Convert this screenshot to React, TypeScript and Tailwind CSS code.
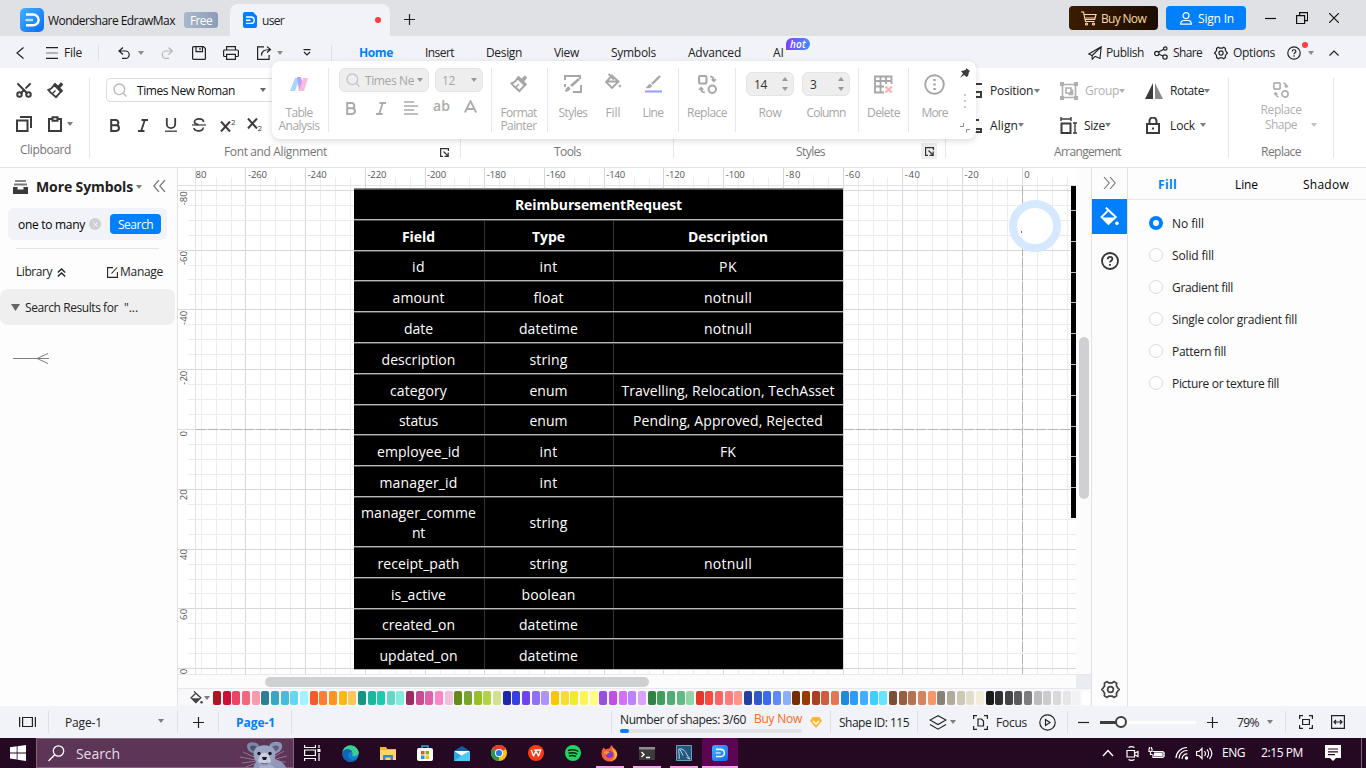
import { useLayoutEffect, useRef } from 'react';
import type { ReactNode } from 'react';
import { Scissors, Search, X } from 'lucide-react';

/** Single-line text whose tracking is adjusted so that it fills a known width. */
function Fit({ w, className = '', children }: { w: number; className?: string; children: string }) {
  const ref = useRef<HTMLSpanElement>(null);
  useLayoutEffect(() => {
    const el = ref.current;
    if (!el) return;
    el.style.letterSpacing = '0px';
    const natural = el.getBoundingClientRect().width;
    el.style.letterSpacing = `${(w - natural) / children.length}px`;
  }, [w, children]);
  return (
    <span className={`block shrink-0 overflow-visible whitespace-pre ${className}`} style={{ width: w }}>
      <span ref={ref} className="inline-block whitespace-pre">{children}</span>
    </span>
  );
}

function Svg({ w, h, className = '', sw = 1.2, children }: { w: number; h: number; className?: string; sw?: number; children: ReactNode }) {
  return (
    <svg width={w} height={h} viewBox={`0 0 ${w} ${h}`} fill="none" stroke="currentColor" strokeWidth={sw} className={`block shrink-0 ${className}`}>
      {children}
    </svg>
  );
}

function Caret({ className = '', fill = '#7d7d7d' }: { className?: string; fill?: string }) {
  return (
    <Svg w={6} h={4} className={className}>
      <path d="M0 0h6L3 4z" fill={fill} stroke="none" />
    </Svg>
  );
}

function EdrawLogo({ size, className = '' }: { size: number; className?: string }) {
  return (
    <svg width={size} height={size} viewBox="0 0 24 24" fill="none" className={`block shrink-0 ${className}`}>
      <defs>
        <linearGradient id="edraw" x1="0" y1="0" x2="1" y2="1">
          <stop offset="0" stopColor="#45b0ff" />
          <stop offset="1" stopColor="#0a6cff" />
        </linearGradient>
      </defs>
      <rect width="24" height="24" rx="5" fill="url(#edraw)" />
      <path d="M6 6.500h7.200a5.400 5.400 0 0 1 0 10.800H6" stroke="#fff" strokeWidth="2.400" />
      <path d="M5.500 12h7.500" stroke="#b9e0ff" strokeWidth="2.400" />
    </svg>
  );
}

function Divider({ className = '' }: { className?: string }) {
  return <div className={`w-px shrink-0 bg-[#dfe0e4] ${className}`} />;
}

function TitleBar() {
  return (
    <div className="flex h-9 shrink-0 items-center bg-[#e0e1e5]">
      <EdrawLogo size={24} className="ml-5 mt-1" />
      <Fit w={127} className="ml-1 mt-[6px] text-[#111]">Wondershare EdrawMax</Fit>
      <div className="ml-[9px] mt-1 flex h-4 w-[34px] items-center justify-center rounded-[3px] bg-linear-to-r from-[#a9b8ca] to-[#8c9cb8]">
        <Fit w={22} className="mt-px text-white">Free</Fit>
      </div>
      <div className="ml-3 mt-1 flex h-8 w-40 items-center rounded-t-lg bg-[#f2f3f9]">
        <svg width="14" height="16" viewBox="0 0 14 16" fill="none" className="ml-[13px] block">
          <path d="M2 0h8l4 4v10a2 2 0 0 1-2 2H2a2 2 0 0 1-2-2V2a2 2 0 0 1 2-2z" fill="#0080ff" />
          <path d="M3 5h5a3.100 3.100 0 0 1 0 6.400H3M3 8.200h4.500" stroke="#fff" strokeWidth="1.400" />
        </svg>
        <Fit w={22} className="ml-[5px] mt-0.5 text-[#222]">user</Fit>
        <div className="ml-[91px] size-1.5 rounded-full bg-[#ff3b3b]" />
      </div>
      <Svg w={11} h={11} className="ml-[14px] mt-[3px] text-[#222]"><path d="M5.500 0v11M0 5.500h11" /></Svg>
      <div className="ml-auto flex h-6 w-[89px] items-center rounded bg-linear-to-r from-[#3a1d03] to-[#1b0c00] text-[#fbd8a4]">
        <Svg w={16} h={15} className="ml-3"><path d="M0 1h2.500l2 9.500h9M3.500 3.500h11.500l-1.300 5H4M4.500 7h9.500" /><circle cx="5.500" cy="13" r="1" /><circle cx="12.500" cy="13" r="1" /></Svg>
        <Fit w={45} className="ml-1 mt-0.5">Buy Now</Fit>
      </div>
      <div className="ml-2 flex h-6 w-20 items-center rounded bg-[#0080ff] text-white">
        <Svg w={12} h={13} className="ml-[14px]"><circle cx="6" cy="3.700" r="3" /><path d="M.7 12.200c-.3-3 2-3.700 3-3.700h4.600c1 0 3.300.7 3 3.700z" /></Svg>
        <Fit w={36} className="ml-[6px] mt-0.5">Sign In</Fit>
      </div>
      <Svg w={11} h={11} className="ml-[19px] text-[#111]"><path d="M0 5.500h11" /></Svg>
      <Svg w={12} h={12} className="ml-5 text-[#111]"><path d="M.6 3.600h8v8h-8zM3.600 3.600v-3h8v8h-3" /></Svg>
      <Svg w={10} h={10} className="ml-[21px] mr-[27px] text-[#111]"><path d="M0 0l10 10M10 0L0 10" /></Svg>
    </div>
  );
}

function MenuBar() {
  return (
    <div className="relative flex h-8 shrink-0 items-center bg-[#f2f3f9] pt-px text-[#222]">
      <Svg w={8} h={12} className="ml-4"><path d="M7.500.5L1 6l6.500 5.500" /></Svg>
      <Svg w={12} h={12} className="ml-[22px]"><path d="M0 .6h12M0 11.400h12" /><path d="M0 6h12" stroke="#888" /></Svg>
      <Fit w={18} className="ml-[6px] mt-px">File</Fit>
      <Divider className="ml-4 h-4" />
      <Svg w={13} h={12} className="ml-[19px]"><path d="M5 .5L1 4l4 3.500M1 4h6.500a3.700 3.700 0 0 1 0 7.400H4" /></Svg>
      <Caret className="ml-[7px]" fill="#8a8a8a" />
      <Svg w={12} h={12} className="ml-[17px] text-[#b5b5b5]"><path d="M7.500.5L11.500 4l-4 3.500M11.500 4H5a3.700 3.700 0 0 0 0 7.400h3" /></Svg>
      <Svg w={14} h={14} className="ml-[19px]"><path d="M.6 1.600a1 1 0 0 1 1-1h9.800l2 2v9.800a1 1 0 0 1-1 1H1.600a1 1 0 0 1-1-1zM4 .6v5h6.500v-5M8 2v2" /></Svg>
      <Svg w={16} h={14} className="ml-[17px]"><path d="M3.600 4V.6h8.800V4M3.600 10.500h-2a1 1 0 0 1-1-1V5a1 1 0 0 1 1-1h12.800a1 1 0 0 1 1 1v4.500a1 1 0 0 1-1 1h-2M3.600 8.300h8.800v5.100H3.600z" /></Svg>
      <Svg w={15} h={14} className="ml-[18px]"><path d="M7 .9H.6v12.500h11.500V9M4.500 9.500c0-4 2.500-6 8.500-6M10 .6l3.500 2.900L10 6.500" /></Svg>
      <Caret className="ml-[5px]" fill="#8a8a8a" />
      <Svg w={8} h={7} className="ml-5"><path d="M.5.6h7M1 3l3 3 3-3" /></Svg>
      <Divider className="ml-5 h-4" />
      <div className="ml-[27px] mt-px flex gap-8">
        <Fit w={34} className="font-bold text-[#0080ff]">Home</Fit>
        <Fit w={29}>Insert</Fit>
        <Fit w={36}>Design</Fit>
        <Fit w={25}>View</Fit>
        <Fit w={45}>Symbols</Fit>
        <Fit w={53}>Advanced</Fit>
        <Fit w={11}>AI</Fit>
      </div>
      <div className="absolute left-[786px] top-[2px] flex h-3 w-6 items-center justify-center rounded-[6px] rounded-bl-none bg-linear-to-r from-[#7c3cff] to-[#3c8cff] text-[10px] font-semibold italic text-white">
        <Fit w={16}>hot</Fit>
      </div>
      <Svg w={14} h={14} sw={1.1} className="ml-auto"><path d="M13.200.8L.8 8l3.400 1.500L13.200.8 12 12.500 7 10.300M4.200 9.500v3.800L7 10.300" /></Svg>
      <Fit w={38} className="ml-1 mt-px">Publish</Fit>
      <Svg w={14} h={14} className="ml-[10px]"><circle cx="2.800" cy="7.500" r="2.200" /><circle cx="11.300" cy="2.500" r="1.700" /><circle cx="11" cy="11" r="2.200" /><path d="M4.500 6l5.300-2.800M5 8.300l4 1.700" /></Svg>
      <Fit w={29} className="ml-[5px] mt-px">Share</Fit>
      <Gear size={14} sw={1.2} className="ml-3" />
      <Fit w={42} className="ml-[5px] mt-px">Options</Fit>
      <Help size={14} sw={1.2} className="ml-3" />
      <Caret className="ml-[7px]" fill="#8a8a8a" />
      <Svg w={10} h={6} className="ml-[15px] mr-[27px]"><path d="M.5 5.500L5 1l4.500 4.500" /></Svg>
      <div className="absolute left-[1302px] top-[6px] size-1.5 rounded-full bg-[#ff4040]" />
    </div>
  );
}

function Gear({ size, sw, className = '' }: { size: number; sw: number; className?: string }) {
  return (
    <svg width={size} height={size} viewBox="0 0 18 18" fill="none" stroke="currentColor" strokeWidth={(sw * 18) / size} strokeLinejoin="round" className={`block shrink-0 ${className}`}>
      <path d="M5.500 1.500L7.500 2.800h3l2-1.300 2.300 1.600-.2 2.400 1.400 2.200 1.300 1.300-1.300 1.300-1.400 2.200.2 2.400-2.300 1.600-2-1.300h-3l-2 1.300-2.300-1.600.2-2.400L2 10.300.7 9 2 7.700l1.400-2.200-.2-2.400z" />
      <circle cx="9" cy="9" r="2.700" />
    </svg>
  );
}

function Help({ size, sw, className = '' }: { size: number; sw: number; className?: string }) {
  return (
    <svg width={size} height={size} viewBox="0 0 18 18" fill="none" stroke="currentColor" strokeWidth={(sw * 18) / size} className={`block shrink-0 ${className}`}>
      <circle cx="9" cy="9" r="8" />
      <path d="M6.700 7.200c0-3.200 4.700-3 4.700-.2 0 1.700-2.400 1.700-2.400 3.500M9 12v1.800" />
    </svg>
  );
}

function BrushIcon({ size, className = '' }: { size: number; className?: string }) {
  return (
    <svg width={size} height={size} viewBox="0 0 18 18" fill="none" stroke="currentColor" strokeWidth="2" className={`block shrink-0 ${className}`}>
      <path d="M8 2.800l7 7L9.500 16C7.500 14 4 12 1.500 8.500 5 7.500 6.500 5 8 2.800z" />
      <path d="M7.500 2l8.500 8.500M11.500 6.500L16 1.500" strokeWidth="3.400" />
      <path d="M6 12l3-3" strokeWidth="1.400" />
    </svg>
  );
}

function SwapIcon({ size, className = '' }: { size: number; className?: string }) {
  return (
    <svg width={size} height={size} viewBox="0 0 18 18" fill="none" stroke="currentColor" strokeWidth="1.900" className={`block shrink-0 ${className}`}>
      <rect x="1" y="1" width="7" height="7" rx="1" />
      <circle cx="13.500" cy="13.500" r="3.500" />
      <path d="M11.500 1.500c2.500 0 3.500 1 3.500 4M13 4l2 2 2-2M6.500 16.500C4 16.500 3 15.500 3 12.500M1 14l2-2 2 2" strokeWidth="1.600" />
    </svg>
  );
}

function BoldI({ className = '' }: { className?: string }) {
  return <Svg w={10} h={13} sw={2} className={className}><path d="M1.200 1h4.500a2.600 2.600 0 0 1 0 5.300H1.200zM1.200 6.300h5a2.800 2.800 0 0 1 0 5.600h-5z" /></Svg>;
}
function ItalicI({ className = '' }: { className?: string }) {
  return <Svg w={10} h={13} sw={1.8} className={className}><path d="M3.500 1H10M0 12h6.500M6.800 1L3.200 12" /></Svg>;
}

function Launcher({ className = '' }: { className?: string }) {
  return <Svg w={9} h={9} className={`text-[#333] ${className}`}><path d="M3 8.400H.6V.6h7.800V3M3.500 3.500l4.500 4.500M8.200 4.500v3.800H4.500" /></Svg>;
}

function Ribbon() {
  return (
    <div className="relative flex h-[100px] shrink-0 border-b border-[#e4e4e8] bg-white pt-[10px] text-[#222]">
      <div className="flex h-20 w-[90px] flex-col border-r border-[#e6e6ea] text-[#3c3c3c]">
        <div className="mt-1 flex h-4 items-center">
          <Scissors size={18} strokeWidth={2.700} className="ml-[15px] -rotate-90" />
          <BrushIcon size={17} className="ml-[14px]" />
        </div>
        <div className="mt-[18px] flex h-[18px] items-center">
          <Svg w={16} h={16} sw={2} className="ml-4"><path d="M1 4.500h10.500V15H1zM4 1h11v11" /></Svg>
          <Svg w={14} h={16} sw={2} className="ml-4"><path d="M4 3H1v12h12V3h-3" /><path d="M4.500 1.200h5v3.500h-5z" /></Svg>
          <Caret className="ml-[5px]" />
        </div>
        <Fit w={51} className="ml-5 mt-[10px] text-[#757575]">Clipboard</Fit>
      </div>
      <div className="flex h-20 w-[371px] flex-col border-r border-[#e6e6ea] pl-4">
        <div className="flex h-6 w-[200px] shrink-0 items-center rounded border border-[#dedede] text-[#111]">
          <Search size={16} strokeWidth={2} className="ml-[5px] text-[#b5b5b5]" />
          <Fit w={98} className="ml-[9px] mt-0.5">Times New Roman</Fit>
          <Caret className="ml-[25px]" fill="#666" />
        </div>
        <div className="mt-[16px] flex h-3.5 items-center text-[#3c3c3c]">
          <BoldI className="ml-1" />
          <ItalicI className="ml-[18px]" />
          <Svg w={12} h={14} sw={1.8} className="ml-[17px]"><path d="M1.800 0v6a4 4 0 0 0 8.400 0V0" /><path d="M0 13.200h12" strokeWidth="1.300" /></Svg>
          <Svg w={14} h={14} sw={1.7} className="ml-[15px]"><path d="M11.500 4c0-4-9-4-9-.3 0 2 1.500 2.600 4 3M11 9.500c1 4.500-9 4.500-9 .5" /><path d="M0 7h14" strokeWidth="1.200" /></Svg>
          <div className="ml-[14px] flex">
            <Svg w={11} h={11} sw={2} className="mt-[3px]"><path d="M1 .5l9 10M10 .5l-9 10" /></Svg>
            <span className="-mt-[2px] text-[8px] leading-3">2</span>
          </div>
          <div className="ml-[11px] flex">
            <Svg w={11} h={11} sw={2} className="mt-px"><path d="M1 .5l9 10M10 .5l-9 10" /></Svg>
            <span className="mt-[5px] text-[8px] leading-3">2</span>
          </div>
        </div>
        <div className="mt-[12px] flex items-center text-[#757575]">
          <Fit w={103} className="ml-[118px]">Font and Alignment</Fit>
          <Launcher className="ml-[113px]" />
        </div>
      </div>
      <div className="flex h-20 w-[213px] items-end border-r border-[#e6e6ea] text-[#757575]">
        <Fit w={27} className="-mb-[2px] ml-[93px]">Tools</Fit>
      </div>
      <div className="flex h-20 w-[272px] items-end border-r border-[#e6e6ea] text-[#757575]">
        <Fit w={29} className="-mb-[2px] ml-[122px]">Styles</Fit>
        <div className="-mb-px ml-24 flex size-4 items-center justify-center bg-[#ededed]"><Launcher /></div>
      </div>
      <div className="flex h-20 w-[283px] flex-col border-r border-[#e6e6ea] text-[#222]">
        <div className="mt-1 flex h-[18px] items-center">
          <Svg w={16} h={16} sw={2} className="ml-5 text-[#3c3c3c]"><path d="M0 1h16M1 9h14v5H1z" /></Svg>
          <Fit w={43} className="ml-[8px]">Position</Fit>
          <Caret className="ml-px" />
          <Svg w={18} h={18} sw={1.6} className="ml-[20px] text-[#b0b0b0]"><path d="M2.500 2.500h13v13h-13z" /><path d="M0 0h4v4H0zM14 0h4v4h-4zM0 14h4v4H0zM14 14h4v4h-4z" fill="#b0b0b0" stroke="none" /><path d="M6 6h5v5H6zM8.500 12.500h4v-5" /></Svg>
          <Fit w={34} className="ml-[7px] text-[#b0b0b0]">Group</Fit>
          <Caret fill="#b0b0b0" />
          <Svg w={18} h={16} sw={0} className="ml-5"><path d="M8 0v16H0z" fill="#3c3c3c" /><path d="M10 0v16h8z" fill="#8a8a8a" /></Svg>
          <Fit w={34} className="ml-[7px]">Rotate</Fit>
          <Caret />
        </div>
        <div className="mt-4 flex h-[18px] items-center">
          <Svg w={16} h={16} sw={2} className="ml-5 text-[#3c3c3c]"><path d="M3 0v16M8 3h5M8 12h7v3H8z" /></Svg>
          <Fit w={28} className="ml-[8px] mt-0.5">Align</Fit>
          <Caret />
          <Svg w={17} h={17} sw={1.4} className="ml-[36px] text-[#3c3c3c]"><path d="M1 0v4M11 0v4M1 2h10M13 6h4M13 16h4M15 6v10" /><path d="M1.500 6.500h9V16h-9z" strokeWidth="2" /></Svg>
          <Fit w={21} className="ml-[7px] mt-0.5">Size</Fit>
          <Caret />
          <Svg w={14} h={17} sw={2} className="ml-[35px] text-[#3c3c3c]"><path d="M1 7h12v9H1zM3.500 7V4a3 3 0 0 1 7 0v3M6 11.500h2" /></Svg>
          <Fit w={25} className="ml-[10px] mt-0.5">Lock</Fit>
          <Caret className="ml-[5px]" />
        </div>
        <Fit w={67} className="ml-[108px] mt-[10px] text-[#757575]">Arrangement</Fit>
      </div>
      <div className="flex h-20 w-[105px] flex-col items-center border-r border-[#e6e6ea] text-[#b0b0b0]">
        <SwapIcon size={16} className="mt-1" />
        <Fit w={41} className="mt-1">Replace</Fit>
        <div className="-mt-px flex items-center self-start pl-9">
          <Fit w={32}>Shape</Fit>
          <Caret className="ml-[14px]" fill="#c0c0c0" />
        </div>
        <Fit w={40} className="mt-[11px] text-[#757575]">Replace</Fit>
      </div>
    </div>
  );
}

function ToolCell({ className, icon, label, w, label2, w2 = 0 }: { className: string; icon: ReactNode; label: string; w: number; label2?: string; w2?: number }) {
  return (
    <div className={`flex shrink-0 flex-col items-center ${className}`}>
      <div className="mt-[5px] flex h-[22px] items-center">{icon}</div>
      <Fit w={w} className="mt-[11px] h-[13px] leading-[13px]">{label}</Fit>
      {label2 ? <Fit w={w2} className="h-[13px] leading-[13px]">{label2}</Fit> : null}
    </div>
  );
}

function Spinner({ value, w, label, lw }: { value: string; w: number; label: string; lw: number }) {
  return (
    <div className="flex w-12 flex-col items-center">
      <div className="mt-1 flex h-6 w-12 items-center rounded-md border border-[#e4e4e4] bg-[#eeeeee] text-[#333]">
        <Fit w={w} className="ml-[7px] mt-0.5">{value}</Fit>
        <Svg w={6} h={14} sw={0} className="ml-auto mr-[5px] text-[#999]"><path d="M0 4h6L3 0zM0 10h6l-3 4z" fill="currentColor" /></Svg>
      </div>
      <Fit w={lw} className="mt-[10px] h-[13px] leading-[13px]">{label}</Fit>
    </div>
  );
}

function FloatingBar() {
  return (
    <div className="absolute left-[272px] top-[61px] z-10 flex h-[78px] w-[704px] rounded-lg bg-white pt-[7px] text-[#a6a6a6] shadow-[0_2px_6px_rgba(0,0,0,0.14)]">
      <ToolCell className="w-[56px] pr-[2px]" label="Table" w={27} label2="Analysis" w2={41} icon={
        <Svg w={18} h={15} sw={0}><path d="M0 14L5 1h5L5 14z" fill="#a5d8fb" /><path d="M7 0h4l2 8-2 6H9z" fill="#b7a3f5" /><path d="M13 1h5l-4 13H9z" fill="#fbbbe0" /></Svg>
      } />
      <Divider className="h-16 bg-[#e8e8e8]" />
      <div className="flex w-[162px] shrink-0 flex-col pl-[10px]">
        <div className="flex gap-1.5">
          <div className="flex h-6 w-[90px] items-center rounded-md border border-[#e4e4e4] bg-[#eeeeee]">
            <Search size={16} className="ml-[5px] text-[#c4c4c4]" />
            <Fit w={49} className="ml-[4px] mt-0.5">Times Ne</Fit>
            <Caret className="ml-[3px]" fill="#999" />
          </div>
          <div className="flex h-6 w-12 items-center rounded-md border border-[#e4e4e4] bg-[#eeeeee]">
            <Fit w={13} className="ml-[6px] mt-0.5">12</Fit>
            <Caret className="ml-[16px]" fill="#999" />
          </div>
        </div>
        <div className="mt-[8px] flex h-4 items-center text-[#ababab]">
          <BoldI className="ml-[7px]" />
          <ItalicI className="ml-5" />
          <Svg w={14} h={14} sw={1.7} className="ml-[18px]"><path d="M0 1h10M0 5h14M0 9h10M0 13h14" /></Svg>
          <Fit w={17} className="ml-[15px] -mt-1 text-[14px] leading-4 font-semibold">ab</Fit>
          <Svg w={13} h={13} sw={1.8} className="ml-[14px] -mt-1"><path d="M.8 12.500L6.500 1l5.700 11.500M3 9h7" /></Svg>
        </div>
      </div>
      <Divider className="h-16 bg-[#e8e8e8]" />
      <ToolCell className="w-[55px] pr-[2px]" label="Format" w={36} label2="Painter" w2={36} icon={<BrushIcon size={18} />} />
      <Divider className="h-16 bg-[#e8e8e8]" />
      <ToolCell className="ml-[5px] w-10" label="Styles" w={29} icon={
        <Svg w={18} h={18} sw={1.9}><path d="M1 5V1h15v3M1 9v3M17 10v7H9" /><path d="M6 14c-3 3-4 2-5 2 2-1 1-4 4-4z" fill="currentColor" strokeWidth="1" /><path d="M7 11l8-7" strokeWidth="2.600" /></Svg>
      } />
      <ToolCell className="w-10" label="Fill" w={15} icon={
        <Svg w={17} h={18} sw={1.9} className="-mt-1"><path d="M7 2.500L1 9l6 6 6.500-6.500zM3.500.8L9 6.500M2.500 8.500h10" /><circle cx="14.800" cy="13" r="1.200" fill="currentColor" stroke="none" /></Svg>
      } />
      <ToolCell className="w-10" label="Line" w={21} icon={
        <Svg w={17} h={18} sw={2.4}><path d="M15 1L7 9" /><path d="M5.500 9c-3 0-2.500 3-5 4 2 .7 6 .5 6.500-2.500z" fill="currentColor" stroke="none" /><path d="M0 16.500h17" stroke="#9a9aff" strokeWidth="2" /></Svg>
      } />
      <Divider className="ml-[5px] h-16 bg-[#e8e8e8]" />
      <ToolCell className="w-14" label="Replace" w={40} icon={<SwapIcon size={19} />} />
      <Divider className="h-16 bg-[#e8e8e8]" />
      <div className="ml-[10px] flex gap-2">
        <Spinner value="14" w={13} label="Row" lw={23} />
        <Spinner value="3" w={7} label="Column" lw={39} />
      </div>
      <Divider className="ml-2 h-16 bg-[#e8e8e8]" />
      <ToolCell className="w-[49px]" label="Delete" w={33} icon={
        <Svg w={19} h={19} sw={1.8}><path d="M10 17.500H1V1.500h16.500V9M1 6h16.500M1 11.500h9M6.500 2v15.500M12 2v7" /><path d="M11.500 11.500l6.500 6M18 11.500l-6.500 6" stroke="#ffb3b3" strokeWidth="2.200" /></Svg>
      } />
      <Divider className="h-16 bg-[#e8e8e8]" />
      <ToolCell className="w-[51px]" label="More" w={26} icon={
        <Svg w={21} h={21} sw={1.9}><circle cx="10.500" cy="10.500" r="9.300" /><path d="M9.200 5h2.600v2H9.200zM9.200 9.500h2.600v2H9.200zM9.200 14h2.600v2H9.200z" fill="currentColor" stroke="none" /></Svg>
      } />
      <div className="flex w-[10px] flex-col items-center">
        <Svg w={10} h={10} sw={0} className="text-[#3c3c3c]"><path d="M6 0l4 3-1 1-1 4-1.500 1-2.400-2L0 10l3-4.500L1 3l3-.5L6 1.500z" fill="currentColor" /></Svg>
        <Svg w={2} h={14} sw={0} className="mt-4 text-[#c8c8c8]"><path d="M0 0h2v2H0zM0 6h2v2H0zM0 12h2v2H0z" fill="currentColor" /></Svg>
        <Svg w={10} h={10} sw={1} className="mt-[15px] text-[#8c8c8c]"><path d="M3.500 0v3.500H0M6.500 9.500v-3H10" /></Svg>
      </div>
    </div>
  );
}

function LeftPanel() {
  return (
    <div className="flex w-[178px] shrink-0 flex-col border-r border-[#e2e2e6] bg-[#fdfdfe] text-[#222]">
      <div className="mt-[9px] flex h-5 items-center">
        <Svg w={15} h={15} sw={0} className="ml-[13px]"><path d="M2 0h11v2H2z" fill="#888" /><path d="M1 3.500h13v2H1z" fill="#777" /><path d="M0 7h4.500v2.500h6V7H15v7H0z" fill="#3a3a3a" /></Svg>
        <Fit w={97} className="ml-2 text-[14px] font-bold">More Symbols</Fit>
        <Caret className="ml-[3px]" />
        <Svg w={13} h={12} sw={1.2} className="-mt-[3px] ml-[11px] text-[#777]"><path d="M6 0L.8 6 6 12M12 0L6.800 6l5.200 6" /></Svg>
      </div>
      <div className="ml-2 mt-[11px] flex h-8 w-[159px] items-center rounded-md bg-[#f2f3f9]">
        <Fit w={67} className="ml-[10px] mt-0.5 text-black">one to many</Fit>
        <div className="ml-1 flex size-3 items-center justify-center rounded-full bg-[#cfcfd2] text-white"><X size={7} strokeWidth={3} /></div>
        <div className="ml-[9px] flex h-5 w-[51px] items-center justify-center rounded bg-[#0080ff] text-white"><Fit w={35} className="mt-0.5">Search</Fit></div>
      </div>
      <div className="ml-4 mt-2 h-px w-[143px] bg-[#e4e4e6]" />
      <div className="mt-[14px] flex h-[18px] items-center">
        <Fit w={36} className="ml-4">Library</Fit>
        <Svg w={9} h={9} sw={1.4} className="ml-[5px]"><path d="M.8 4.500l3.700-3.500 3.700 3.500M.8 8.500L4.500 5l3.700 3.500" /></Svg>
        <Svg w={11} h={11} sw={1.1} className="ml-[41px]"><path d="M6 .6H.6v9.800h9.800V5M4.500 6.500l5.500-6" /></Svg>
        <Fit w={43} className="ml-[2px]">Manage</Fit>
      </div>
      <div className="mt-2 flex h-9 w-[175px] items-center rounded-lg bg-[#efefef]">
        <Svg w={9} h={7} sw={0} className="ml-[11px] text-[#666]"><path d="M0 0h9L4.500 7z" fill="currentColor" /></Svg>
        <Fit w={93} className="ml-[5px] mt-px">Search Results for</Fit>
        <Fit w={14} className="ml-[6px] mt-px">"...</Fit>
      </div>
      <Svg w={36} h={12} sw={1} className="ml-[13px] mt-[27px] text-[#808080]"><path d="M0 6.500h36M24 6.500L35 1.500M24 6.500l11 5" /></Svg>
    </div>
  );
}

const ROWS: [string, string, string, number?, number?, number?][] = [
  ['id', 'int', 'PK', 13, 18, 18],
  ['amount', 'float', 'notnull', 52, 30, 48],
  ['date', 'datetime', 'notnull', 29, 59, 48],
  ['description', 'string', '', 74, 38, 0],
  ['category', 'enum', 'Travelling, Relocation, TechAsset', 57, 38, 213],
  ['status', 'enum', 'Pending, Approved, Rejected', 39, 38, 190],
  ['employee_id', 'int', 'FK', 83, 18, 16],
  ['manager_id', 'int', '', 78, 18, 0],
  ['manager_comme', 'string', '', 115, 38, 0],
  ['receipt_path', 'string', 'notnull', 82, 38, 48],
  ['is_active', 'boolean', '', 55, 54, 0],
  ['created_on', 'datetime', '', 73, 59, 0],
  ['updated_on', 'datetime', '', 78, 59, 0],
];

function EntityTable() {
  const line = 'border-b border-b-[#b8b8b8] border-t border-t-[#4c4c4c]';
  const cell = 'flex items-center justify-center pt-[3px] pr-px';
  return (
    <div className="absolute left-[176px] top-[20px] flex w-[489px] flex-col border-t border-[#888] bg-black text-[14px] text-white">
      <div className={`flex h-[30.8px] items-center justify-center pt-0.5 font-bold ${line}`}><Fit w={167}>ReimbursementRequest</Fit></div>
      <div className={`flex h-[30.8px] font-bold ${line}`}>
        <div className={`w-[131px] border-r border-[#333] ${cell}`}><Fit w={33}>Field</Fit></div>
        <div className={`w-[129px] border-r border-[#333] ${cell}`}><Fit w={33}>Type</Fit></div>
        <div className={`flex-1 ${cell}`}><Fit w={80}>Description</Fit></div>
      </div>
      {ROWS.map(([a, b, c, wa = 0, wb = 0, wc = 0], i) => (
        <div key={i} className={`flex ${a === 'manager_comme' ? 'h-[50px]' : 'h-[30.8px]'} ${line}`}>
          <div className={`w-[131px] flex-col border-r border-[#333] leading-5 ${cell}`}>
            <Fit w={wa}>{a}</Fit>
            {a === 'manager_comme' ? <Fit w={13}>nt</Fit> : null}
          </div>
          <div className={`w-[129px] border-r border-[#333] ${cell}`}><Fit w={wb}>{b}</Fit></div>
          <div className={`flex-1 ${cell}`}>{c ? <Fit w={wc}>{c}</Fit> : null}</div>
        </div>
      ))}
    </div>
  );
}

function Canvas() {
  const vs = Array.from({ length: 60 }, (_, i) => i).map((i) => ({ x: Math.floor(844.3 - (56 - i) * 14.93), major: i % 4 === 0 })).filter((l) => l.x > 17 && l.x < 898);
  const hs = Array.from({ length: 34 }, (_, i) => i).map((i) => ({ y: Math.floor(22.3 + i * 14.95), major: i % 4 === 0 })).filter((l) => l.y < 506);
  return (
    <div className="relative h-[506px] w-[898px] overflow-hidden bg-white">
      <svg width="898" height="506" viewBox="0 0 898 506" className="absolute inset-0 block" fill="none">
        {vs.map((l) => <path key={l.x} d={`M${l.x + 0.5} ${l.major ? 0 : 9}V506`} stroke={l.major ? '#d8d8da' : '#ececee'} />)}
        {hs.map((l) => <path key={l.y} d={`M${l.major ? 0 : 10} ${l.y + 0.5}H898`} stroke={l.major ? '#d8d8da' : '#ececee'} />)}
        <path d="M0 17.500H898M17.500 0V506" stroke="#e2e2e6" />
        <path d="M844.500 18V506M18 261.500H898" stroke="#b4b4b4" strokeDasharray="10 2" />
        <g fontSize="9.500" fill="#555" fontFamily="Open Sans">
          <text x="17.500" y="10" textLength="11">80</text>
          {Array.from({ length: 14 }, (_, i) => i).map((i) => (
            <text key={i} x={844.3 - (13 - i) * 59.72 + 2} y="10" textLength={i === 13 ? 5 : i === 12 ? 14 : i < 9 ? 19 : 15}>{String(-260 + i * 20)}</text>
          ))}
          {[-80, -60, -40, -20, 0, 20, 40, 60, 80].map((v, i) => (
            <text key={v} transform={`translate(9 ${22.3 + i * 59.8 + (v < 0 ? 15 : v === 0 ? 7 : 11)}) rotate(-90)`} textLength={v < 0 ? 14 : v === 0 ? 5 : 11}>{String(v)}</text>
          ))}
        </g>
      </svg>
      <EntityTable />
      <div className="absolute left-[893px] top-[18px] h-[332px] w-[5px] bg-black">
        {Array.from({ length: 10 }, (_, i) => <div key={i} className="mt-[24px] h-px w-full bg-[#bbb] not-first:mt-[29.800px]" />)}
      </div>
      <div className="absolute left-[831px] top-[32px] size-[52px] rounded-full border-8 border-[#d5e8fd] bg-white" />
      <div className="absolute left-[843px] top-[63px] h-[2px] w-px bg-[#a040e0]" />
    </div>
  );
}

const SWATCHES = '#b01322 #cc0f35 #ee4462 #f7667f #fa9aac #2a8093 #38a7c2 #44bcdc #61d7f0 #a4f2ff #f65a2a #ff7c36 #ff931c #fdb813 #fdc55c #159681 #1ab79d #1ccbae #64d8c4 #84ecdc #9c2b62 #cb4a92 #e460ab #fb86c8 #f2c0db #628c16 #78a428 #97bf26 #b1d34a #d1e18f #1f28ad #3642de #6f42f4 #8e6ff8 #ae92f8 #fbc800 #fbdb2c #f0ea2c #fbf452 #fdfd80 #9a4edc #c14fe4 #d56ffc #bc81fc #d9a3fc #2f8145 #3ea157 #52ad75 #62ba84 #8fd6a9 #e9362a #fd493d #fb6464 #fd7b7b #ff9488 #253ea0 #3057cb #3a6af5 #6089fc #8aaef7 #752d00 #993b00 #a93f25 #d05d40 #e27757 #1a8cdb #309bf4 #43adff #3dcffd #66e3ff #7b4e36 #995d42 #b7714f #d48560 #f69769 #8a8176 #b2ab9a #cbc9b6 #e4dccc #f3ecd8 #1a1a1a #303030 #454545 #5c5c5c #7c7c7c #bcbcbc #cbcbcb #d9d9d9 #e6e6e6 #f2f2f2 #ffffff'.split(' ');

function Bucket({ size, className = '' }: { size: number; className?: string }) {
  return (
    <svg width={size} height={size} viewBox="0 0 18 18" fill="none" stroke="currentColor" strokeWidth="1.800" className={`block shrink-0 ${className}`}>
      <path d="M8 3L1.500 9.500 8 16l7-6.500zM5.500.5L12 7" />
      <path d="M2 10h12.500L8.500 16.500z" fill="currentColor" stroke="none" />
      <circle cx="16" cy="15.500" r="1.700" fill="currentColor" stroke="none" />
    </svg>
  );
}

function Center() {
  return (
    <div className="flex w-[913px] shrink-0 flex-col">
      <div className="flex h-[506px]">
        <Canvas />
        <div className="w-[15px] bg-[#fcfcfd] pl-[3px] pt-[169px]"><div className="h-[162px] w-[10px] rounded-full bg-[#cfd0d2]" /></div>
      </div>
      <div className="flex h-[15px] border-y border-[#e8e8ec] bg-[#fcfcfd]">
        <div className="ml-[87px] mt-[2px] h-[10px] w-[384px] rounded-full bg-[#cfd0d2]" />
        <div className="ml-auto h-full w-[15px] bg-[#ebebf2]" />
      </div>
      <div className="flex h-[17px] items-center bg-[#f8f8fb]">
        <Bucket size={13} className="ml-[12px] text-[#444]" />
        <Caret className="ml-px" />
        <div className="ml-[3px] flex gap-[1.660px]">
          {SWATCHES.map((c, i) => <div key={i} className="h-3.5 w-2 shrink-0 rounded-[2px]" style={{ background: c }} />)}
        </div>
      </div>
    </div>
  );
}

function RightPanel() {
  const options: [string, number][] = [['No fill', 32], ['Solid fill', 42], ['Gradient fill', 61], ['Single color gradient fill', 125], ['Pattern fill', 54], ['Picture or texture fill', 107]];
  return (
    <>
      <div className="flex w-[37px] shrink-0 flex-col items-center border-x border-[#e2e2e6] bg-[#fcfcfd]">
        <Svg w={13} h={12} sw={1.1} className="mt-[9px] text-[#777]"><path d="M1 0l5.200 6L1 12M7 0l5.200 6L7 12" /></Svg>
        <div className="mt-[10px] flex h-[35px] w-[35px] items-center justify-center bg-[#0080ff] text-white"><Bucket size={19} /></div>
        <Help size={18} sw={1.8} className="ml-px mt-[18px] text-[#333]" />
        <Gear size={19} sw={1.7} className="mb-[7px] ml-px mt-auto text-[#444]" />
      </div>
      <div className="flex flex-1 flex-col bg-[#fdfdfe] text-[#222]">
        <div className="flex h-8 items-center border-b border-[#e8e8ea] pt-0.5 text-black">
          <Fit w={19} className="ml-[30px] font-bold text-[#0080ff]">Fill</Fit>
          <Fit w={23} className="ml-[58px]">Line</Fit>
          <Fit w={46} className="ml-[45px]">Shadow</Fit>
        </div>
        <div className="mt-[15px] flex flex-col gap-4 pl-[21px]">
          {options.map(([label, w], i) => (
            <div key={label} className="flex h-4 items-center gap-[9px]">
              <div className={i === 0 ? 'size-3.5 rounded-full border-4 border-[#0080ff] bg-white' : 'size-3.5 rounded-full border border-[#dcdcdc] bg-white'} />
              <Fit w={w} className="mt-0.5">{label}</Fit>
            </div>
          ))}
        </div>
      </div>
    </>
  );
}

function StatusBar() {
  return (
    <div className="flex h-8 shrink-0 items-center bg-[#f2f3f9] text-[#222]">
      <Svg w={17} h={12} sw={1.2} className="ml-[19px]"><path d="M.6 1v10M16.400 1v10M3.600 1.500h9.800v9H3.600z" /></Svg>
      <Divider className="ml-3 h-[22px]" />
      <Fit w={37} className="ml-4 mt-0.5">Page-1</Fit>
      <Caret className="-mt-0.5 ml-[56px]" />
      <Divider className="ml-[13px] h-[22px]" />
      <Svg w={11} h={11} className="ml-[15px]"><path d="M5.500 0v11M0 5.500h11" /></Svg>
      <Divider className="ml-[14px] h-[22px]" />
      <Fit w={39} className="ml-[17px] mt-0.5 font-bold text-[#0080ff]">Page-1</Fit>
      <Divider className="ml-4 h-6" />
      <Divider className="ml-[319px] h-[22px]" />
      <div className="ml-2 flex w-[182px] flex-col">
        <div className="flex h-[15px] items-center justify-between leading-[15px]">
          <Fit w={126}>Number of shapes: 3/60</Fit>
          <Fit w={48} className="-mt-0.5 text-[#ff6a13]">Buy Now</Fit>
        </div>
        <div className="mt-[2px] h-1 rounded-full bg-[#e2e3e6]"><div className="h-1 w-[9px] rounded-full bg-[#0080ff]" /></div>
      </div>
      <Svg w={12} h={11} sw={0} className="ml-2"><path d="M2.500 0h7L12 4l-6 7L0 4z" fill="#ffb62e" /><path d="M3 4l3 3 3-3" stroke="#fff" strokeWidth="1.500" /></Svg>
      <Divider className="ml-2 h-[22px]" />
      <Fit w={70} className="ml-2 mt-0.5">Shape ID: 115</Fit>
      <Divider className="ml-2 h-[22px]" />
      <Svg w={18} h={15} sw={1.1} className="ml-[11px]"><path d="M9 .7L1 5l8 4.500L17 5zM1 9.500l8 4.700 8-4.700" /></Svg>
      <Caret className="ml-[3px]" />
      <Svg w={15} h={15} sw={1.2} className="ml-[17px]"><path d="M.6 4V.6H4M11 .6h3.400V4M.6 11v3.400H4M11 14.400h3.400V11M5 4h3.500L10.500 6v5H5z" /></Svg>
      <Fit w={31} className="ml-2 mt-0.5">Focus</Fit>
      <Svg w={17} h={17} sw={1.2} className="ml-[12px]"><circle cx="8.500" cy="8.500" r="7.700" /><path d="M6.500 5.500l4.500 3-4.500 3z" /></Svg>
      <Divider className="ml-[11px] h-[22px]" />
      <Svg w={11} h={11} className="ml-[10px]"><path d="M0 5.500h11" /></Svg>
      <div className="ml-[11px] flex h-3 w-24 items-center">
        <div className="h-[3px] w-4 bg-[#3c3c3c]" />
        <div className="-ml-px size-3 shrink-0 rounded-full border-2 border-[#3c3c3c] bg-white" />
        <div className="h-[3px] flex-1 rounded-full bg-white" />
      </div>
      <Svg w={11} h={11} className="ml-[11px]"><path d="M5.500 0v11M0 5.500h11" /></Svg>
      <Fit w={22} className="ml-[19px] mt-0.5">79%</Fit>
      <Caret className="ml-[8px]" />
      <Divider className="ml-[12px] h-[22px]" />
      <Svg w={14} h={14} sw={1.2} className="ml-[13px]"><path d="M.6 4V.6H4M10 .6h3.400V4M.6 10v3.400H4M10 13.400h3.400V10M3.600 4.500h6.800v5H3.600z" /></Svg>
      <Svg w={14} h={14} sw={1.2} className="ml-[18px]"><path d="M.6.6h12.800v12.800H.6zM3 7h8M5 5L3 7l2 2M9 5l2 2-2 2" /></Svg>
    </div>
  );
}

function Weasel() {
  return (
    <svg width="48" height="29" viewBox="0 0 48 29" fill="none" className="block shrink-0">
      <path d="M13 29c0-6 4-10 12-12 12 0 20 4 22 12z" fill="#8f97bd" />
      <path d="M18 29c1-5 5-7 9-6 5 1 8 3 9 6z" fill="#aab0cd" />
      <path d="M7 5c0-4 7-5 11-2l2 4-6 5C10 12 7 9 7 5z" fill="#7d88a8" />
      <path d="M10 6c1-2 5-2 7 0l-3 4c-2 0-4-2-4-4z" fill="#4f5168" />
      <path d="M42 4c-1-4-8-4-12-1l-1 4 6 6c4-1 8-5 7-9z" fill="#8c95b6" />
      <path d="M39 6c-1-2-5-2-7 0l3 4c2 0 4-2 4-4z" fill="#5f6078" />
      <path d="M15 8c4-5 15-5 19 0 3 5 1 12-3 15-4 3-9 3-13 0-4-4-6-10-3-15z" fill="#98a4c2" />
      <path d="M20 14c1-3 8-3 9 0l2 6c-3 4-10 4-13 0z" fill="#c9cede" />
      <circle cx="19" cy="12.500" r="1.700" fill="#171523" /><circle cx="30" cy="12.500" r="1.700" fill="#171523" />
      <path d="M22 16h5l-1 3h-3z" fill="#1c1826" />
      <path d="M21 22c2 1 5 1 7 0" stroke="#5b566c" />
      <path d="M16 17L3 11M16 19L0 16M17 20L2 22M18 21L6 26M32 17l12-7M32 19l15-4M31 20l15 1" stroke="#a98fa8" strokeWidth=".7" />
    </svg>
  );
}

function App({ bar = '', active = false, children }: { bar?: string; active?: boolean; children: ReactNode }) {
  return (
    <div className={`relative flex h-[30px] shrink-0 items-center justify-center ${active ? 'w-9 bg-[#5c0354]' : 'w-[37px]'}`}>
      {children}
      {bar ? <div className={`absolute bottom-0 h-[2px] bg-[#f3a5ea] ${bar}`} /> : null}
    </div>
  );
}

function Taskbar() {
  return (
    <div className="flex h-[30px] shrink-0 items-center bg-[#250822] text-white">
      <Svg w={16} h={16} sw={0} className="ml-[10px]"><path d="M0 2.300l6.700-1v6.200H0zM7.500 1.200L16 0v7.500H7.500zM0 8.400h6.700v6.200L0 13.600zM7.500 8.400H16V16l-8.500-1.200z" fill="#fff" /></Svg>
      <div className="ml-[10px] flex h-[30px] w-[258px] items-center border border-[#85647f] bg-[#5c3557]">
        <Svg w={17} h={17} sw={1.3} className="ml-[11px]"><circle cx="10.500" cy="6" r="5.200" /><path d="M6.700 9.800L.5 16" /></Svg>
        <Fit w={44} className="ml-[11px] mt-0.5 text-[14px] text-[#e6dde5]">Search</Fit>
        <div className="ml-[120px] mt-1"><Weasel /></div>
      </div>
      <Svg w={17} h={16} sw={1.2} className="ml-[10px]"><path d="M.6 0v2.500h10.800V0M.6 16v-2.500h10.800V16M.6 5h10.800v5.500H.6zM15 0v3M15 8v8" /><path d="M13.500 4h3v3h-3z" fill="#fff" stroke="none" /></Svg>
      <div className="ml-[11px] flex">
        <App>
          <svg width="17" height="17" viewBox="0 0 17 17"><circle cx="8.500" cy="8.500" r="8.300" fill="#1380d0" /><path d="M.5 7C2-1 14-2 16.700 7c.5 4-4 5-6.700 4 3-4-4-8-9.500-4z" fill="#3fcf8c" /><path d="M.5 7c3-5 9-3 10 .5C8 6 5.500 8 6 11c1 4 5 5 9 3-5 6-15 3-14.500-7z" fill="#1361b5" /></svg>
        </App>
        <App><svg width="16" height="15" viewBox="0 0 16 15"><path d="M0 1h6l1.500 2H16v11H0z" fill="#f5b41e" /><path d="M0 4h16v10H0z" fill="#ffd766" /><path d="M3 14V9h10v5h-2.500v-2.500h-5V14z" fill="#2f8be0" /></svg></App>
        <App><svg width="16" height="16" viewBox="0 0 16 16"><path d="M5 4V1h6v3" fill="none" stroke="#3aa5e8" strokeWidth="1.400" /><rect y="3" width="16" height="13" rx="2" fill="#fff" /><path d="M4 6h3.500v3.500H4z" fill="#f25022" /><path d="M8.500 6H12v3.500H8.500z" fill="#7fba00" /><path d="M4 10.500h3.500V14H4z" fill="#00a4ef" /><path d="M8.500 10.500H12V14H8.500z" fill="#ffb900" /></svg></App>
        <App><svg width="16" height="15" viewBox="0 0 16 15"><path d="M0 5l8-5 8 5v3H0z" fill="#0f5fae" /><path d="M1 5h14v6H1z" fill="#fff" /><path d="M0 5l8 5 8-5v10H0z" fill="#2aa6ea" /><path d="M0 15l10-7 6-3v10z" fill="#50c8f5" /></svg></App>
        <App><svg width="16" height="16" viewBox="0 0 16 16"><circle cx="8" cy="8" r="8" fill="#fbc116" /><path d="M8 8L1.070 4A8 8 0 0 1 14.930 4z" fill="#e33b2e" /><path d="M8 8v8A8 8 0 0 1 1.070 4z" fill="#229a4a" /><circle cx="8" cy="8" r="4" fill="#fff" /><circle cx="8" cy="8" r="3.100" fill="#2f77e8" /></svg></App>
        <App><svg width="16" height="16" viewBox="0 0 16 16" fill="none"><circle cx="8" cy="8" r="8" fill="#fb3b12" /><path d="M3.300 5L5.500 11 8 6l2.500 5 2.200-6H6.200" stroke="#fff" strokeWidth="1.400" strokeLinejoin="round" /></svg></App>
        <App><svg width="16" height="16" viewBox="0 0 16 16" fill="none"><circle cx="8" cy="8" r="8" fill="#1ed760" /><path d="M3 5.500c4-1.200 7.500-.7 10.300.9M3.500 8.300c3.300-1 6.300-.6 8.700.8M4 11c2.700-.8 5-.5 7 .7" stroke="#12210f" strokeWidth="1.500" /></svg></App>
        <App bar="w-7"><svg width="17" height="17" viewBox="0 0 17 17"><path d="M8.500 16.500a8 8 0 0 1-8-8C.5 5 2 4 2.500 2.500c1 .5 1.500 1.300 1.500 2C6 3.500 8 4 9 3c0-1.500 1-2.500 2-3 0 2 2 3 3.500 4.500 4 5 1 12-6 12z" fill="#ff5a36" /><path d="M10.500 2c2 2 5 4 5.500 7 0 4-4 7-7 7 5-2 6-6 3-10z" fill="#ffc62b" /><circle cx="8.500" cy="9.500" r="3.600" fill="#7a3ccc" /><path d="M3 7c2-2 5-1 6 .5-2 0-3 1-3 2.500-2-1-3-2-3-3z" fill="#ff9a2a" /></svg></App>
        <App bar="w-7"><svg width="16" height="13" viewBox="0 0 16 13" fill="none"><path d="M0 0h16v13H0z" fill="#3b3b3b" /><path d="M0 0h16v2.500H0z" fill="#8d8d8d" /><path d="M2.500 5L5 7.500 2.500 10M7 10.500h4" stroke="#fff" strokeWidth="1.400" /></svg></App>
        <App bar="w-7"><svg width="16" height="16" viewBox="0 0 16 16" fill="none"><path d="M.5.5h15v15H.5z" fill="#22587e" stroke="#6a9cb8" /><path d="M3 14c1-4-1-7 0-10 4-1 7 3 8 6l3 4-3.500-1.500M4 4.500l3 6" stroke="#cfe3ee" strokeWidth=".9" /></svg></App>
        <App active bar="w-9"><EdrawLogo size={16} /></App>
      </div>
      <Svg w={12} h={8} sw={1.4} className="ml-auto"><path d="M1 7l5-5.500L11 7" /></Svg>
      <Svg w={13} h={15} sw={1.2} className="ml-[12px]"><path d="M1 4.500h7.500v6.500H1zM9 7l3-1.500v5L9 9M2.500 1.500c2-1.200 4-1.200 6 0M2.500 13.500c2 1.200 4 1.200 6 0" /></Svg>
      <Svg w={17} h={13} sw={1.2} className="ml-[9px]"><path d="M5 4.500h10v6H5v-3M15.500 6h1.500v3h-1.500M1 1.500v3h3v-3M1.500 0v2M3.500 0v2M2.500 5v2.500h2" /><path d="M6 5.500h8v4H6z" fill="#fff" stroke="none" /></Svg>
      <Svg w={14} h={14} sw={1.2} className="ml-[10px]"><path d="M1 12A11 11 0 0 1 12 1.500M4 12.500A8 8 0 0 1 12.500 4.500M7 13a5 5 0 0 1 5.500-5" /><circle cx="11.500" cy="12" r="1.700" fill="#fff" stroke="none" /></Svg>
      <Svg w={17} h={13} sw={1.2} className="ml-[7px]"><path d="M.6 4.500H3L6 1.500v10l-3-3H.6zM8.500 4c1.200 1.500 1.200 3.500 0 5M11 2.500c2 2.300 2 5.700 0 8M13.500 1c3 3.500 3 7.500 0 11" /></Svg>
      <Fit w={23} className="ml-[9px]">ENG</Fit>
      <Fit w={42} className="ml-4">2:15 PM</Fit>
      <Svg w={16} h={16} sw={1.2} className="ml-[22px]"><path d="M0 0h16v13h-5l-3 3-3-3H0z" fill="#fff" stroke="none" /><path d="M3 4h10M3 6.800h10M3 9.600h7" stroke="#250822" /></Svg>
      <div className="ml-5 mr-1 h-[30px] w-px bg-[#77657a]" />
    </div>
  );
}

export default function Screen() {
  return (
    <div className="relative flex h-[768px] w-[1366px] flex-col overflow-hidden bg-white font-['Open_Sans','Noto_Sans',sans-serif] text-[12px] leading-[16px]">
      <TitleBar />
      <MenuBar />
      <Ribbon />
      <FloatingBar />
      <div className="flex h-[538px] shrink-0">
        <LeftPanel />
        <Center />
        <RightPanel />
      </div>
      <StatusBar />
      <Taskbar />
    </div>
  );
}
